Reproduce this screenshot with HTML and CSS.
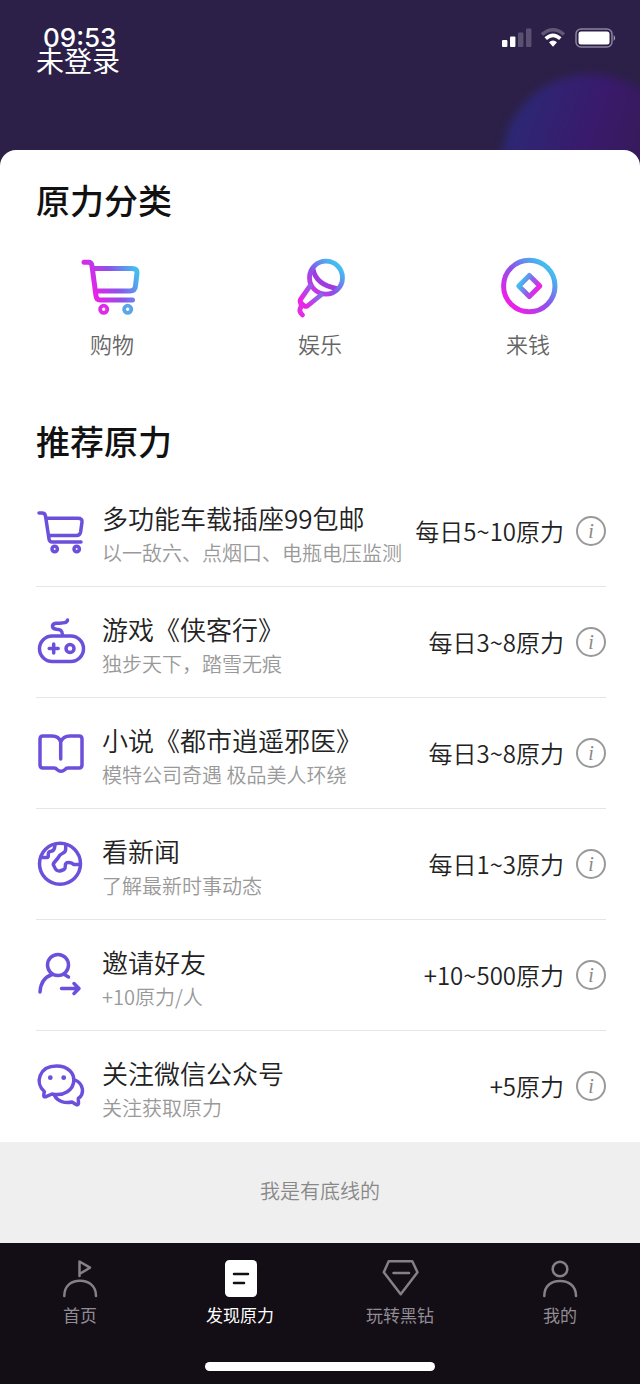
FILE: index.html
```html
<!DOCTYPE html>
<html lang="zh-CN">
<head>
<meta charset="utf-8">
<meta name="viewport" content="width=device-width, initial-scale=1">
<title>发现原力</title>
<link rel="stylesheet" href="styles.css">
</head>
<body>
<header class="hero">
  <div class="hero-glow"></div>
  <div class="status">
    <time class="clock">09:53</time>
    <svg class="signal" width="30" height="20" viewBox="0 0 30 20" fill="#fff" aria-hidden="true"><rect x="1" y="12" width="5.4" height="7" rx="1"/><rect x="9" y="8.500" width="5.400" height="10.500" rx="1"/><g opacity=".22"><rect x="17" y="4.500" width="5.400" height="14.500" rx="1"/><rect x="25" y="0.500" width="5.400" height="18.500" rx="1"/></g></svg>
    <svg width="26" height="20" viewBox="0 0 26 20" aria-hidden="true"><path d="M2 6.500Q13-3 24 6.500" fill="none" stroke="#fff" stroke-width="3.600" opacity=".25"/><path d="M5.700 10.700Q13 4 20.300 10.700" fill="none" stroke="#fff" stroke-width="3.600"/><path d="M9 14.300Q13 10.800 17 14.300L13 18.800Z" fill="#fff"/></svg>
    <svg width="42" height="20" viewBox="0 0 42 20" aria-hidden="true"><rect x="1" y="1" width="36" height="18" rx="5" fill="none" stroke="#8b839c" stroke-width="1.500"/><rect x="3.500" y="3.500" width="31" height="13" rx="2.500" fill="#fff"/><path d="M38.700 7q3 3 0 6z" fill="#a59eb3"/></svg>
  </div>
  <p class="account">未登录</p>
</header>

<main class="sheet">
  <section>
    <h2 class="heading">原力分类</h2>
    <nav class="cats">
      <a class="cat" href="#shop">
        <svg width="64" height="64" viewBox="0 0 64 64" fill="none" stroke="url(#g1)" stroke-width="5" stroke-linecap="round" stroke-linejoin="round" aria-hidden="true">
          <defs><linearGradient id="g1" gradientUnits="userSpaceOnUse" x1="14" y1="40" x2="58" y2="20"><stop offset="0" stop-color="#ec20e8"/><stop offset=".5" stop-color="#8c52ea"/><stop offset="1" stop-color="#43bdf0"/></linearGradient></defs>
          <path d="M4 7.300H8.500Q11.500 7.300 12 11L16 41Q16.600 45 20 45H52.500M13 13.500H52Q57.500 13.500 57 18L55.500 31Q55 36 50 36H16"/>
          <circle cx="23.700" cy="54.300" r="3.600" stroke-width="3.800" stroke="#df2be6"/><circle cx="47.700" cy="54.300" r="3.600" stroke-width="3.800" stroke="#5ba6ea"/>
        </svg>
        <span>购物</span>
      </a>
      <a class="cat" href="#fun">
        <svg width="64" height="64" viewBox="0 0 64 64" fill="none" stroke="url(#g2)" stroke-width="4.800" stroke-linecap="round" stroke-linejoin="round" aria-hidden="true">
          <defs><linearGradient id="g2" gradientUnits="userSpaceOnUse" x1="22" y1="42" x2="50" y2="12"><stop offset="0" stop-color="#ec20e8"/><stop offset=".5" stop-color="#8c52ea"/><stop offset="1" stop-color="#43bdf0"/></linearGradient>
          <linearGradient id="g3" gradientUnits="userSpaceOnUse" x1="14" y1="46" x2="31" y2="36"><stop offset="0" stop-color="#ec20e8"/><stop offset="1" stop-color="#7970ea"/></linearGradient></defs>
          <path stroke="#a03be0" d="M25 14Q28 30 49 33.500"/><circle cx="38" cy="22.700" r="16.500"/><path stroke="url(#g3)" d="M22 31L12.500 44.500Q11.500 46.500 13 48L16.500 51Q18.500 52 20 50.500L33 40"/><path stroke="#e42be6" d="M13 48V52Q10 56 14.500 60"/>
        </svg>
        <span>娱乐</span>
      </a>
      <a class="cat" href="#earn">
        <svg width="64" height="64" viewBox="0 0 64 64" fill="none" stroke-width="5" stroke-linejoin="round" aria-hidden="true">
          <defs><linearGradient id="g4" x1=".15" y1=".85" x2=".85" y2=".15"><stop offset="0" stop-color="#ec20e8"/><stop offset=".5" stop-color="#8c52ea"/><stop offset="1" stop-color="#43bdf0"/></linearGradient>
          <linearGradient id="g5" x1=".1" y1=".3" x2=".9" y2=".7"><stop offset="0" stop-color="#43bdf0"/><stop offset=".5" stop-color="#8c62ea"/><stop offset="1" stop-color="#ec20e8"/></linearGradient></defs>
          <circle cx="33.300" cy="31" r="25.700" stroke="url(#g4)"/><path stroke="url(#g5)" d="M33.300 20.500L43.800 31L33.300 41.500L22.800 31Z"/>
        </svg>
        <span>来钱</span>
      </a>
    </nav>
  </section>

  <section>
    <h2 class="heading">推荐原力</h2>
    <ul class="list">
      <li class="row">
        <svg class="icon" viewBox="0 0 48 48" aria-hidden="true"><path d="M3 6H6Q9 6 9.500 9L13 32Q13.500 35 16 35H45M10 11.300H42Q46.500 11.300 46 15L44.600 25Q44 28.500 40.500 28.500H13"/><circle cx="18.700" cy="42" r="2.700"/><circle cx="40.700" cy="42" r="2.700"/></svg>
        <div class="copy"><h3>多功能车载插座99包邮</h3><p>以一敌六、点烟口、电瓶电压监测</p></div>
        <span class="reward">每日5~10原力</span>
        <button class="info" type="button" aria-label="说明">i</button>
      </li>
      <li class="row">
        <svg class="icon" viewBox="0 0 48 48" aria-hidden="true"><rect x="3.500" y="18" width="44" height="25.500" rx="12.700"/><path d="M26.500 17C26.500 12 24 11.500 20.500 11.200C15 10.500 15.500 6 20 5.300C25 4.800 31 6 31.500 2M13.200 30.500H22.200M17.700 26V35"/><circle cx="34" cy="30.500" r="4"/></svg>
        <div class="copy"><h3>游戏《侠客行》</h3><p>独步天下，踏雪无痕</p></div>
        <span class="reward">每日3~8原力</span>
        <button class="info" type="button" aria-label="说明">i</button>
      </li>
      <li class="row">
        <svg class="icon" viewBox="0 0 48 48" aria-hidden="true"><path d="M24.700 30V13Q23 7 16 7H7Q4 7 4 10V36Q4 39 7 39H18Q20 39 21 40.500Q25 44 29 40.500Q30 39 32 39H43Q46 39 46 36V10Q46 7 43 7H34Q27 7 24.700 13"/></svg>
        <div class="copy"><h3>小说《都市逍遥邪医》</h3><p>模特公司奇遇 极品美人环绕</p></div>
        <span class="reward">每日3~8原力</span>
        <button class="info" type="button" aria-label="说明">i</button>
      </li>
      <li class="row">
        <svg class="icon" viewBox="0 0 48 48" aria-hidden="true"><circle cx="24" cy="23.700" r="20.500"/><path d="M6 17.500H11Q12.500 17.500 12.300 15Q12 11.500 15 11.300Q18.500 11 19 5M29.700 5V9Q29.700 12 27 13Q23.500 14.500 22 18L17.800 23Q16.800 24.500 18 26Q20 31.500 24 31L28 29.500Q29.500 28.500 29.300 26Q29 22.500 32.500 22.500Q36 22.500 37.500 24.500H44"/></svg>
        <div class="copy"><h3>看新闻</h3><p>了解最新时事动态</p></div>
        <span class="reward">每日1~3原力</span>
        <button class="info" type="button" aria-label="说明">i</button>
      </li>
      <li class="row">
        <svg class="icon" viewBox="0 0 48 48" aria-hidden="true"><circle cx="22" cy="14" r="10.500"/><path d="M4 41C4.500 32 9 26 16 23.500M28 23.300L32.500 26M25.500 37.500H42.500M38 32.500L43 37.500L38 42.500"/></svg>
        <div class="copy"><h3>邀请好友</h3><p>+10原力/人</p></div>
        <span class="reward">+10~500原力</span>
        <button class="info" type="button" aria-label="说明">i</button>
      </li>
      <li class="row">
        <svg class="icon" viewBox="0 0 48 48" aria-hidden="true"><path d="M8.300 29.500C-1.500 21 3 4 20.500 4C33 4 38 12 37.800 18.500C37.500 28 28 34.500 16 32L9.500 34.800Q7.500 35 7.800 33ZM39 18C47.500 21.500 49 31.500 42.300 36.500L42.500 41.500Q42 43.500 40 42.500L36 40C29 41.500 21.500 39.500 18.500 33.500"/><circle class="dot" cx="14.300" cy="15.700" r="2.400"/><circle class="dot" cx="27.700" cy="15.700" r="2.400"/></svg>
        <div class="copy"><h3>关注微信公众号</h3><p>关注获取原力</p></div>
        <span class="reward">+5原力</span>
        <button class="info" type="button" aria-label="说明">i</button>
      </li>
    </ul>
  </section>
</main>

<p class="end">我是有底线的</p>

<footer class="tabbar">
  <nav class="tabs">
    <a class="tab" href="#home"><svg viewBox="0 0 40 40" aria-hidden="true"><path d="M19.500 18V3.500L30 9.700L19.500 16M4.300 38C4.300 28 11 22.800 20 22.800S36 28 36 38"/></svg><span>首页</span></a>
    <a class="tab active" href="#discover" aria-current="page"><svg viewBox="0 0 40 40" aria-hidden="true"><rect class="page" x="5" y="2" width="32" height="37" rx="4.500"/><path class="lines" d="M14 16H28M14 25H24"/></svg><span>发现原力</span></a>
    <a class="tab" href="#diamond"><svg viewBox="0 0 40 40" aria-hidden="true"><path d="M8.700 3.300H32.300L37.500 14.300L20.700 36.300L3.800 14.300ZM13.500 15H29"/></svg><span>玩转黑钻</span></a>
    <a class="tab" href="#me"><svg viewBox="0 0 40 40" aria-hidden="true"><circle cx="20" cy="11" r="7.300"/><path d="M4.300 38C4.300 28 11 23 20 23S36 28 36 38"/></svg><span>我的</span></a>
  </nav>
  <div class="home-indicator"></div>
</footer>
</body>
</html>
```

FILE: styles.css
```css
* {
  box-sizing: border-box;
  margin: 0;
  padding: 0;
}

body {
  display: flex;
  flex-direction: column;
  min-height: 100vh;
  background: #efefef;
  color: #222;
  font-family: "Noto Sans CJK SC", sans-serif;
}

a {
  color: inherit;
  text-decoration: none;
}

svg {
  display: block;
  overflow: visible;
}

/* Header */
.hero {
  position: relative;
  overflow: hidden;
  padding: 40px 36px 86px;
  background: #2c2048;
  color: #fff;
}

.hero-glow {
  position: absolute;
  top: 74px;
  right: -38px;
  width: 176px;
  height: 176px;
  border-radius: 50%;
  background: linear-gradient(110deg, #2b2a76 8%, #391a6c 45%, #361a50 85%);
  filter: blur(4px);
}

.status {
  position: absolute;
  top: 22px;
  left: 43px;
  right: 23px;
  display: flex;
  align-items: center;
  gap: 9px;
}

.clock {
  margin-right: auto;
  font: 500 26px/32px Inter, sans-serif;
}

.account {
  position: relative;
  font-size: 28px;
  font-weight: 400;
  line-height: 40px;
}

/* Content sheet */
.sheet {
  position: relative;
  margin-top: -16px;
  border-radius: 16px 16px 0 0;
  background: #fff;
}

.heading {
  padding: 25px 36px 0;
  color: #111;
  font-size: 34px;
  font-weight: 500;
  line-height: 50px;
}

.cats {
  display: grid;
  grid-template-columns: repeat(3, 1fr);
  padding: 30px 8px 32px;
}

.cat {
  display: flex;
  flex-direction: column;
  align-items: center;
  gap: 8px;
  color: #666;
  font-size: 22px;
  font-weight: 350;
  line-height: 32px;
}

.list {
  padding: 10px 34px 0 36px;
  list-style: none;
}

.row {
  display: flex;
  align-items: center;
  padding: 16px 0;
  border-bottom: 1px solid #e6e6e6;
}

.row:last-child {
  border-bottom-color: transparent;
}

.icon {
  flex: none;
  width: 48px;
  height: 48px;
  margin-right: 18px;
  fill: none;
  stroke: #6c50dc;
  stroke-width: 3.5;
  stroke-linecap: round;
  stroke-linejoin: round;
}

.icon .dot {
  fill: #6c50dc;
  stroke: none;
}

.copy {
  flex: 1;
  min-width: 0;
  padding-top: 8px;
  white-space: nowrap;
}

.copy h3 {
  font-size: 26px;
  font-weight: 350;
  line-height: 36px;
}

.copy p {
  color: #999;
  font-size: 20px;
  font-weight: 350;
  line-height: 34px;
}

.reward {
  margin-right: 12px;
  font-size: 24px;
  font-weight: 350;
  line-height: 36px;
  white-space: nowrap;
}

.info {
  flex: none;
  width: 30px;
  height: 30px;
  border: 2px solid #999;
  border-radius: 50%;
  background: none;
  color: #888;
  font: italic 20px/24px "Liberation Serif", serif;
}

.end {
  flex: 1;
  padding: 33px 0 36px;
  color: #888;
  font-size: 20px;
  font-weight: 350;
  line-height: 32px;
  text-align: center;
}

/* Tab bar */
.tabbar {
  padding: 15px 0 13px;
  background: #130e15;
}

.tabs {
  display: grid;
  grid-template-columns: repeat(4, 1fr);
}

.tab {
  display: flex;
  flex-direction: column;
  align-items: center;
  gap: 5px;
  color: #918c94;
  font-size: 17px;
  line-height: 24px;
}

.tab svg {
  width: 40px;
  height: 40px;
  fill: none;
  stroke: #858088;
  stroke-width: 2.5;
  stroke-linecap: round;
  stroke-linejoin: round;
}

.tab.active {
  color: #fff;
}

.tab .page {
  fill: #fff;
  stroke: none;
}

.tab .lines {
  stroke: #130e15;
}

.home-indicator {
  width: 36%;
  height: 9px;
  margin: 35px auto 0;
  border-radius: 5px;
  background: #fff;
}
```
